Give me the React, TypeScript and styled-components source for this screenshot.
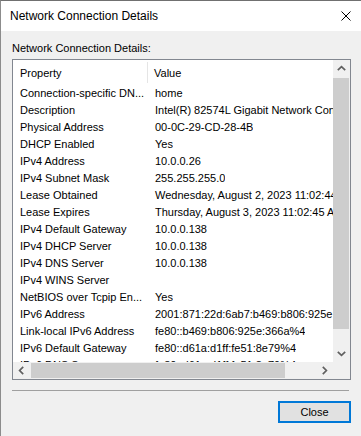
import React from 'react';
import styled, { createGlobalStyle } from 'styled-components';

type Detail = { name: string; value: string };

const details: Detail[] = [
  { name: 'Connection-specific DN...', value: 'home' },
  { name: 'Description', value: 'Intel(R) 82574L Gigabit Network Connection' },
  { name: 'Physical Address', value: '00-0C-29-CD-28-4B' },
  { name: 'DHCP Enabled', value: 'Yes' },
  { name: 'IPv4 Address', value: '10.0.0.26' },
  { name: 'IPv4 Subnet Mask', value: '255.255.255.0' },
  { name: 'Lease Obtained', value: 'Wednesday, August 2, 2023 11:02:44 AM' },
  { name: 'Lease Expires', value: 'Thursday, August 3, 2023 11:02:45 AM' },
  { name: 'IPv4 Default Gateway', value: '10.0.0.138' },
  { name: 'IPv4 DHCP Server', value: '10.0.0.138' },
  { name: 'IPv4 DNS Server', value: '10.0.0.138' },
  { name: 'IPv4 WINS Server', value: '' },
  { name: 'NetBIOS over Tcpip En...', value: 'Yes' },
  { name: 'IPv6 Address', value: '2001:871:22d:6ab7:b469:b806:925e:366a' },
  { name: 'Link-local IPv6 Address', value: 'fe80::b469:b806:925e:366a%4' },
  { name: 'IPv6 Default Gateway', value: 'fe80::d61a:d1ff:fe51:8e79%4' },
  { name: 'IPv6 DNS Server', value: 'fe80::d61a:d1ff:fe51:8e79%4' },
];

const Chevron: React.FC<{ dir: 'up' | 'down' | 'left' | 'right' }> = ({ dir }) => {
  const rot = { up: 0, down: 180, left: -90, right: 90 }[dir];
  return (
    <svg width="9" height="9" viewBox="0 0 9 9" style={{ transform: `rotate(${rot}deg)` }}>
      <path d="M0.8 6.2 L4.5 2.6 L8.2 6.2" fill="none" stroke="#606060" strokeWidth="1.7" />
    </svg>
  );
};

const App: React.FC = () => {
  return (
    <>
      <GlobalStyle />
      <Window>
        <TitleBar>
          <Title>Network Connection Details</Title>
          <svg width="10" height="10" viewBox="0 0 10 10">
            <path d="M0.5 0.5 L9.5 9.5 M9.5 0.5 L0.5 9.5" stroke="#000" strokeWidth="1" />
          </svg>
        </TitleBar>
        <Body>
          <Caption>Network Connection Details:</Caption>
          <ListBox>
            <ListArea>
              <Header>
                <HeaderCell $indent={7}>Property</HeaderCell>
                <HeaderDivider />
                <HeaderCell $indent={6}>Value</HeaderCell>
              </Header>
              {details.map((d) => (
                <Row key={d.name}>
                  <Cell $indent={7}>{d.name}</Cell>
                  <Cell $indent={7}>{d.value}</Cell>
                </Row>
              ))}
            </ListArea>
            <VScroll>
              <ArrowBox>
                <Chevron dir="up" />
              </ArrowBox>
              <VThumb />
              <Track />
              <ArrowBox>
                <Chevron dir="down" />
              </ArrowBox>
            </VScroll>
            <HScroll>
              <ArrowBox>
                <Chevron dir="left" />
              </ArrowBox>
              <HThumb />
              <Track />
              <ArrowBox>
                <Chevron dir="right" />
              </ArrowBox>
            </HScroll>
            <Corner />
          </ListBox>
          <Divider />
          <Footer>
            <Button>Close</Button>
          </Footer>
        </Body>
      </Window>
    </>
  );
};

export default App;

const GlobalStyle = createGlobalStyle`
  html, body {
    margin: 0;
    padding: 0;
  }
  body {
    font-family: 'Liberation Sans', Arial, sans-serif;
    background: #f0f0f0;
    color: #000;
  }
`;

const Window = styled.div`
  width: 361px;
  height: 436px;
  box-sizing: border-box;
  border-left: 1px solid #8c8c8c;
  border-top: 1px solid #707070;
  display: flex;
  flex-direction: column;
  overflow: hidden;
`;

const TitleBar = styled.div`
  height: 30px;
  flex-shrink: 0;
  background: #fff;
  display: flex;
  align-items: center;
  justify-content: space-between;
  padding: 0 10px 1px 9px;
  box-sizing: border-box;
`;

const Title = styled.span`
  font-size: 12px;
`;

const Body = styled.div`
  flex: 1;
  background: #f0f0f0;
  padding: 0 10px 0 11px;
  display: flex;
  flex-direction: column;
`;

const Caption = styled.div`
  margin: 10px 0 3px;
  font-size: 11px;
  line-height: 15px;
  height: 15px;
`;

const ListBox = styled.div`
  height: 321px;
  box-sizing: border-box;
  border: 1px solid #828790;
  background: #fff;
  display: grid;
  grid-template-columns: minmax(0, 1fr) 17px;
  grid-template-rows: minmax(0, 1fr) 17px;
`;

const ListArea = styled.div`
  overflow: hidden;
  font-size: 11px;
`;

const Header = styled.div`
  display: grid;
  grid-template-columns: 134px 1px 1fr;
  height: 25px;
  align-items: center;
`;

const HeaderCell = styled.div<{ $indent: number }>`
  padding-left: ${(p) => p.$indent}px;
`;

const HeaderDivider = styled.div`
  width: 1px;
  height: 21px;
  background: #e5e5e5;
`;

const Row = styled.div`
  display: grid;
  grid-template-columns: 135px max-content;
  height: 17px;
  line-height: 17px;
  white-space: nowrap;
`;

const Cell = styled.div<{ $indent: number }>`
  padding-left: ${(p) => p.$indent}px;
  overflow: hidden;
`;

const VScroll = styled.div`
  background: #f0f0f0;
  display: flex;
  flex-direction: column;
`;

const HScroll = styled.div`
  background: #f0f0f0;
  display: flex;
`;

const ArrowBox = styled.div`
  width: 17px;
  height: 17px;
  flex-shrink: 0;
  display: flex;
  align-items: center;
  justify-content: center;
`;

const VThumb = styled.div`
  height: 251px;
  margin: 1px 1px 0 0;
  background: #cdcdcd;
`;

const HThumb = styled.div`
  width: 254px;
  margin: 1px 0 1px 1px;
  background: #cdcdcd;
`;

const Track = styled.div`
  flex: 1;
`;

const Corner = styled.div`
  background: #f0f0f0;
`;

const Divider = styled.div`
  height: 1px;
  margin: 10px 2px 0 0;
  background: #a0a0a0;
`;

const Footer = styled.div`
  display: flex;
  justify-content: flex-end;
  margin-top: 10px;
`;

const Button = styled.button`
  width: 73px;
  height: 22px;
  box-sizing: border-box;
  border: 2px solid #0078d7;
  background: #e1e1e1;
  font-family: 'Liberation Sans', Arial, sans-serif;
  font-size: 11px;
  color: #000;
  padding: 0;
`;
